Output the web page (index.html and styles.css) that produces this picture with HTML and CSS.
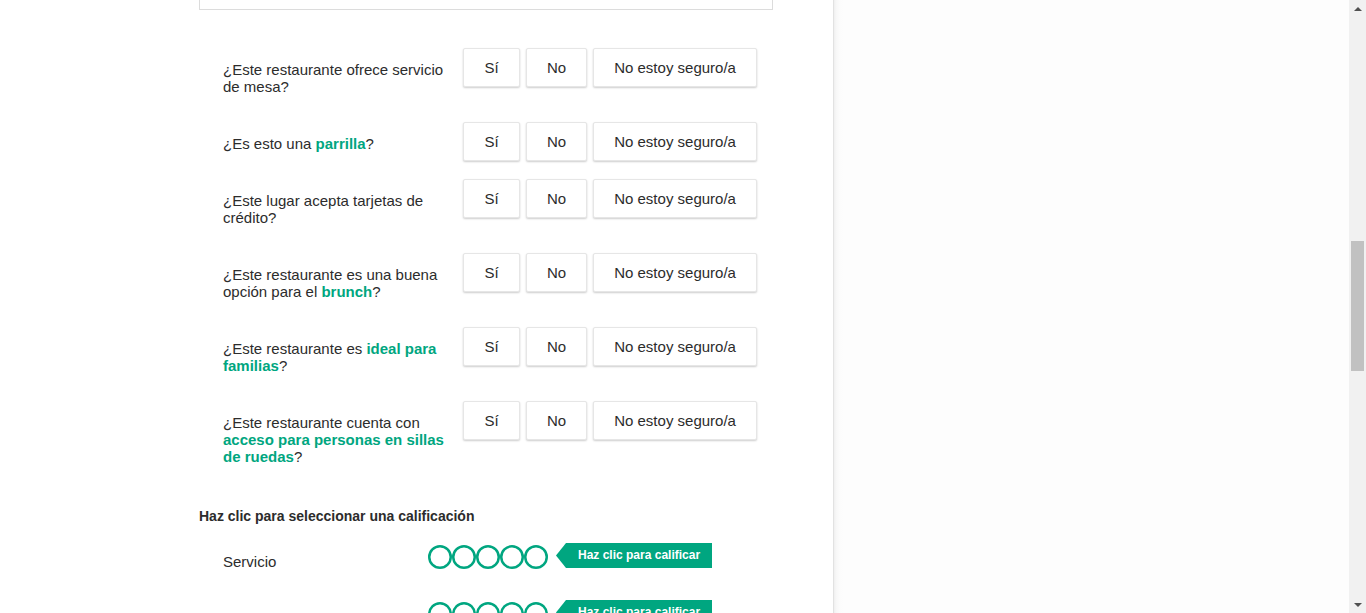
FILE: index.html
```html
<!DOCTYPE html>
<html lang="es">
<head>
<meta charset="utf-8">
<title>Calificación</title>
<link rel="stylesheet" href="styles.css">
</head>
<body>
<div class="page">
  <main class="main">
    <div class="prev-box"></div>

    <section class="questions">
      <div class="q-row">
        <p class="q-text">¿Este restaurante ofrece servicio de mesa?</p>
        <div class="q-btns"><button class="btn">Sí</button><button class="btn">No</button><button class="btn">No estoy seguro/a</button></div>
      </div>
      <div class="q-row">
        <p class="q-text">¿Es esto una <b class="hl">parrilla</b>?</p>
        <div class="q-btns"><button class="btn">Sí</button><button class="btn">No</button><button class="btn">No estoy seguro/a</button></div>
      </div>
      <div class="q-row">
        <p class="q-text">¿Este lugar acepta tarjetas de crédito?</p>
        <div class="q-btns"><button class="btn">Sí</button><button class="btn">No</button><button class="btn">No estoy seguro/a</button></div>
      </div>
      <div class="q-row">
        <p class="q-text">¿Este restaurante es una buena opción para el <b class="hl">brunch</b>?</p>
        <div class="q-btns"><button class="btn">Sí</button><button class="btn">No</button><button class="btn">No estoy seguro/a</button></div>
      </div>
      <div class="q-row">
        <p class="q-text">¿Este restaurante es <b class="hl">ideal para familias</b>?</p>
        <div class="q-btns"><button class="btn">Sí</button><button class="btn">No</button><button class="btn">No estoy seguro/a</button></div>
      </div>
      <div class="q-row">
        <p class="q-text">¿Este restaurante cuenta con <b class="hl">acceso para personas en sillas de ruedas</b>?</p>
        <div class="q-btns"><button class="btn">Sí</button><button class="btn">No</button><button class="btn">No estoy seguro/a</button></div>
      </div>
    </section>

    <h3 class="rate-title">Haz clic para seleccionar una calificación</h3>

    <section class="ratings">
      <div class="r-row">
        <span class="r-label">Servicio</span>
        <svg class="bubbles" width="120" height="24" viewBox="0 0 120 24">
          <circle cx="12" cy="12" r="10.75"/><circle cx="36" cy="12" r="10.75"/><circle cx="60" cy="12" r="10.75"/><circle cx="84" cy="12" r="10.75"/><circle cx="108" cy="12" r="10.75"/>
        </svg>
        <span class="tag">Haz clic para calificar</span>
      </div>
      <div class="r-row">
        <span class="r-label">Comida</span>
        <svg class="bubbles" width="120" height="24" viewBox="0 0 120 24">
          <circle cx="12" cy="12" r="10.75"/><circle cx="36" cy="12" r="10.75"/><circle cx="60" cy="12" r="10.75"/><circle cx="84" cy="12" r="10.75"/><circle cx="108" cy="12" r="10.75"/>
        </svg>
        <span class="tag">Haz clic para calificar</span>
      </div>
    </section>
  </main>

  <aside class="aside"></aside>

  <div class="scrollbar">
    <div class="sb-arrow sb-up"></div>
    <div class="sb-track"><div class="sb-thumb"></div></div>
    <div class="sb-arrow sb-down"></div>
  </div>
</div>
</body>
</html>
```

FILE: styles.css
```css
html, body {
  margin: 0;
  padding: 0;
  height: 613px;
  overflow: hidden;
  background: #fff;
}

body {
  font-family: "Liberation Sans", Arial, sans-serif;
  color: #2c2c2c;
}

.page {
  display: flex;
  height: 613px;
}

.main {
  width: 833px;
  flex: none;
  padding-left: 199px;
  box-sizing: border-box;
  background: #fff;
}

.prev-box {
  width: 572px;
  height: 9px;
  border: 1px solid #dcdcdc;
  border-top: none;
}

.questions {
  margin-top: 38px;
  padding-left: 24px;
}

.q-row {
  display: flex;
  align-items: flex-start;
}

.q-text {
  width: 226px;
  margin: 0 14px 0 0;
  padding: 13px 0 27px;
  font-size: 15px;
  line-height: 17px;
}

.hl {
  color: #00a680;
  font-weight: bold;
}

.q-btns {
  display: flex;
  gap: 6px;
}

.btn {
  height: 39px;
  min-width: 57px;
  padding: 0 20px;
  background: #fff;
  border: 1px solid #e6e6e6;
  border-radius: 2px;
  box-shadow: 0 1px 2px rgba(0, 0, 0, 0.2);
  font-family: "Liberation Sans", Arial, sans-serif;
  font-size: 15px;
  color: #2c2c2c;
  cursor: pointer;
}

.rate-title {
  margin: 16px 0 0;
  font-size: 14px;
  line-height: 16px;
  font-weight: bold;
  color: #2c2c2c;
}

.ratings {
  margin-top: 19px;
  padding-left: 24px;
}

.r-row {
  display: flex;
  align-items: flex-start;
  margin-bottom: 30px;
}

.r-label {
  width: 205px;
  margin-top: 10px;
  font-size: 15px;
  line-height: 17px;
}

.bubbles {
  margin-top: 2px;
  fill: none;
  stroke: #00a680;
  stroke-width: 2.5;
}

.tag {
  margin-left: 8px;
  height: 25px;
  line-height: 25px;
  padding: 0 12px 0 22px;
  background: #00a680;
  color: #fff;
  font-size: 12px;
  font-weight: bold;
  clip-path: polygon(10px 0, 100% 0, 100% 100%, 10px 100%, 0 50%);
}

.aside {
  flex: 1;
  border-left: 1px solid #e2e2e2;
  background: linear-gradient(to right, #efefef 0, #f7f7f7 2px, #fcfcfc 6px, #fdfdfd 10px);
}

.scrollbar {
  width: 17px;
  flex: none;
  background: #f1f1f1;
  display: flex;
  flex-direction: column;
}

.sb-arrow {
  height: 17px;
  flex: none;
  display: flex;
  justify-content: center;
  align-items: center;
}

.sb-up::before,
.sb-down::before {
  content: "";
  width: 0;
  height: 0;
  border-left: 4px solid transparent;
  border-right: 4px solid transparent;
}

.sb-up::before {
  border-bottom: 4px solid #505050;
}

.sb-down::before {
  border-top: 4px solid #505050;
}

.sb-track {
  flex: 1;
}

.sb-thumb {
  margin: 224px 2px 0;
  height: 130px;
  background: #c1c1c1;
}
```
